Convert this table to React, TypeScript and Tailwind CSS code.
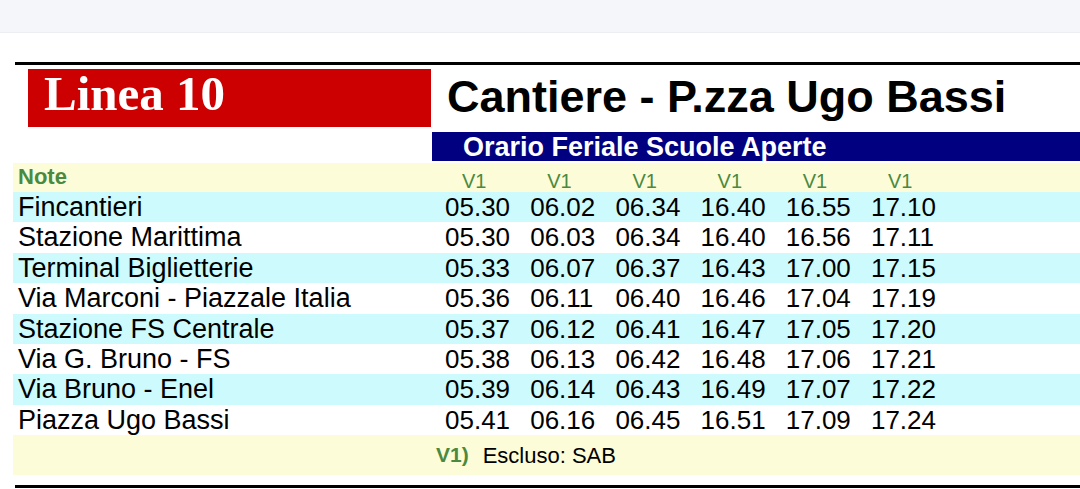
const stops: { name: string; times: string[] }[] = [
  { name: 'Fincantieri', times: ['05.30', '06.02', '06.34', '16.40', '16.55', '17.10'] },
  { name: 'Stazione Marittima', times: ['05.30', '06.03', '06.34', '16.40', '16.56', '17.11'] },
  { name: 'Terminal Biglietterie', times: ['05.33', '06.07', '06.37', '16.43', '17.00', '17.15'] },
  { name: 'Via Marconi - Piazzale Italia', times: ['05.36', '06.11', '06.40', '16.46', '17.04', '17.19'] },
  { name: 'Stazione FS Centrale', times: ['05.37', '06.12', '06.41', '16.47', '17.05', '17.20'] },
  { name: 'Via G. Bruno - FS', times: ['05.38', '06.13', '06.42', '16.48', '17.06', '17.21'] },
  { name: 'Via Bruno - Enel', times: ['05.39', '06.14', '06.43', '16.49', '17.07', '17.22'] },
  { name: 'Piazza Ugo Bassi', times: ['05.41', '06.16', '06.45', '16.51', '17.09', '17.24'] },
];

const notes = ['V1', 'V1', 'V1', 'V1', 'V1', 'V1'];

export default function App() {
  return (
    <div className="w-[1080px] h-[489px] overflow-hidden bg-white font-['Liberation_Sans',Arial,sans-serif]">
      {/* browser-ish strip on top */}
      <div className="h-[33px] bg-[#f5f6fa] border-b border-[#eceef2]" />

      <div className="pt-[29px]">
        <div className="ml-[15px] h-[3px] bg-black" />

        {/* header */}
        <div className="flex items-start mt-[4px] h-[58px]">
          <div className="ml-[28px] w-[403px] h-[58px] bg-[#cc0000] pl-[16px]">
            <span className="font-['Liberation_Serif','Times_New_Roman',serif] font-bold text-white text-[49px] leading-[50px]">
              Linea 10
            </span>
          </div>
          <div className="ml-[16px] text-[45px] font-bold leading-[56px] text-black whitespace-nowrap">
            Cantiere - P.zza Ugo Bassi
          </div>
        </div>

        <div className="ml-[432px] mt-[5px] h-[29px] bg-[#000080] pl-[31px] pt-[2px]">
          <span className="text-white font-bold text-[27px] leading-[27px] whitespace-nowrap">
            Orario Feriale Scuole Aperte
          </span>
        </div>

        {/* timetable */}
        <div className="ml-[13px] mt-[2px]">
          <div className="flex h-[29px] bg-[#fdfcd8]">
            <div className="w-[432px] pl-[5px] pt-[2px] text-[22px] leading-[24px] font-bold text-[#4a8a40]">
              Note
            </div>
            {notes.map((n, i) => (
              <div
                key={i}
                className="w-[85.2px] pl-[17px] pt-[7px] text-[20px] leading-[22px] text-[#4a8a40]"
              >
                {n}
              </div>
            ))}
          </div>

          {stops.map((s, r) => (
            <div
              key={s.name}
              className={`flex h-[30.4px] leading-[30.4px] text-black ${
                r % 2 === 0 ? 'bg-[#cdfbfd]' : 'bg-white'
              }`}
            >
              <div className="w-[432px] pl-[5px] text-[27px] whitespace-nowrap">{s.name}</div>
              {s.times.map((t, i) => (
                <div key={i} className="w-[85.2px] text-[26px] whitespace-nowrap">
                  {t}
                </div>
              ))}
            </div>
          ))}

          <div className="flex items-center h-[40px] bg-[#fdfcd8] pl-[423px]">
            <span className="text-[21px] font-bold text-[#4a8a40]">V1)</span>
            <span className="ml-[14px] text-[22px] text-black">Escluso: SAB</span>
          </div>
        </div>

        <div className="ml-[15px] mt-[10px] h-[3px] bg-black" />
      </div>
    </div>
  );
}
